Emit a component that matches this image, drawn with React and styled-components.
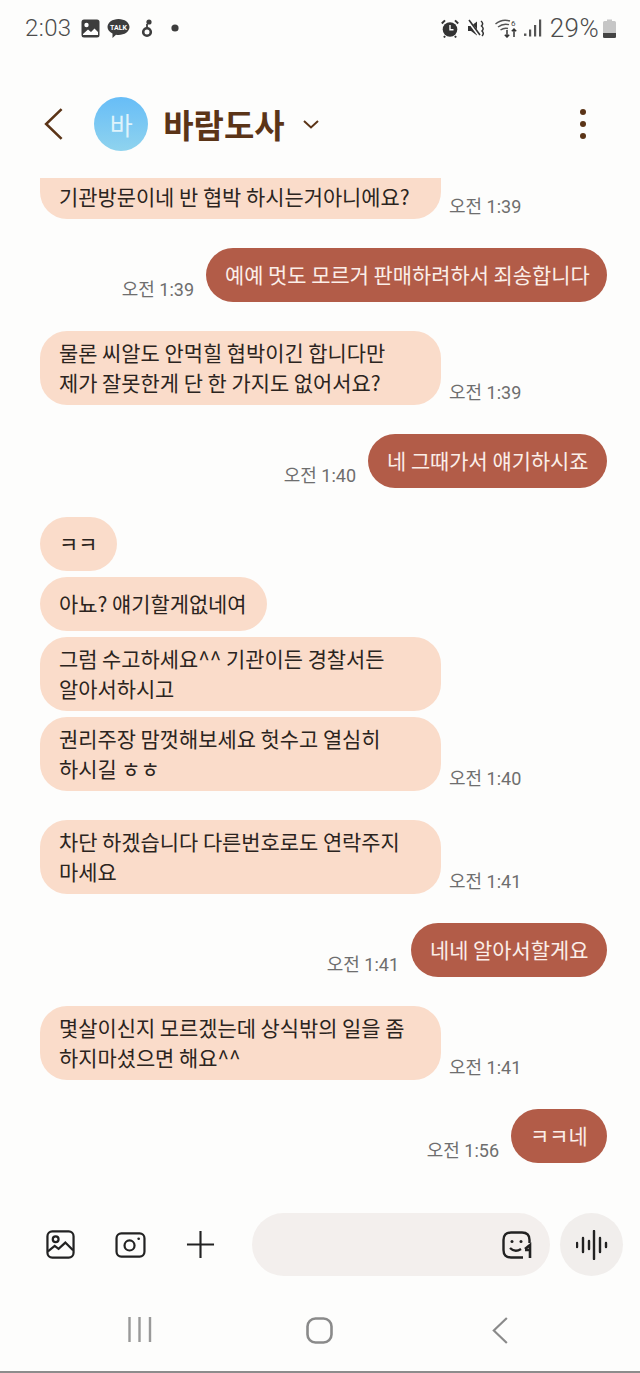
import React from "react";
import styled, { createGlobalStyle } from "styled-components";

const Global = createGlobalStyle`
  html, body { margin: 0; padding: 0; background: #fdfdfc; }
  * { box-sizing: border-box; }
`;
const FONT = `Roboto, "Noto Sans CJK KR", "Noto Sans", sans-serif`;
const KFONT = `"Noto Sans CJK KR", "Noto Sans", sans-serif`;

const Screen = styled.div`
  width: 640px; height: 1373px; display: flex; flex-direction: column;
  background: #fdfdfc; font-family: ${FONT}; overflow: hidden;
`;
const StatusBar = styled.div`
  height: 56px; flex: none; display: flex; align-items: center; justify-content: space-between;
  padding: 0 24px 0 25px; color: #4c4c4c;
`;
const StatusGroup = styled.div`display: flex; align-items: center;`;
const StatusText = styled.span`
  font-size: ${p => p.$size || 24}px; font-weight: 300; letter-spacing: 0.4px; line-height: 1;
  margin-left: ${p => p.$ml || 0}px;
`;
const Icon = styled.svg`flex: none; display: block; margin-left: ${p => p.$ml || 0}px; margin-right: ${p => p.$mr || 0}px;`;

const Header = styled.header`
  height: 122px; flex: none; display: flex; align-items: center; padding: 14px 44px 0 44px; color: #5b3417;
`;
const Avatar = styled.div`
  width: 54px; height: 54px; border-radius: 50%; margin-left: 31px; flex: none;
  background: linear-gradient(180deg, #67bdf7 0%, #8fd3ee 100%);
  display: flex; align-items: center; justify-content: center;
  color: #dff3fb; font-size: 25px; font-weight: 400; font-family: ${KFONT};
`;
const Name = styled.h1`
  margin: 0 0 0 15px; font-size: 33px; line-height: 1; font-weight: 700; color: #5b3417; font-family: ${KFONT};
`;
const Spacer = styled.div`flex: 1;`;

const List = styled.main`
  flex: none; height: 985px; overflow: hidden; display: flex; flex-direction: column; justify-content: flex-end;
`;
const Row = styled.div`
  flex: none; display: flex; align-items: flex-end; padding: 0 33px 0 40px;
  justify-content: ${p => (p.$sent ? "flex-end" : "flex-start")};
  margin-top: ${p => (p.$tight ? 6 : 29)}px;
`;
const Bubble = styled.div`
  flex: none; width: ${p => p.$w}px; min-height: 54px; padding: 6px 10px 8px 19px;
  border-radius: 27px; font-size: 20.9px; line-height: 30px; font-family: ${KFONT};
  display: flex; flex-direction: column; justify-content: center; white-space: nowrap;
  background: ${p => (p.$sent ? "#b25c48" : "#fadcca")};
  color: ${p => (p.$sent ? "#fbeee8" : "#2b2420")};
`;
const Time = styled.span`
  flex: none; font-size: 18px; line-height: 24px; color: #6e6e6e; white-space: nowrap;
  margin: ${p => (p.$sent ? "0 12px 0 0" : "0 0 0 8px")};
`;
const Composer = styled.div`
  height: 63px; margin-top: 50px; flex: none; display: flex; align-items: center; padding: 0 17px 0 46px; color: #222;
`;
const Tools = styled.div`display: flex; align-items: center; gap: 40px; width: 206px; flex: none;`;
const Input = styled.div`
  width: 298px; height: 63px; border-radius: 32px; background: #f3efed; flex: none;
  display: flex; align-items: center; justify-content: flex-end; padding-right: 18px;
`;
const Voice = styled.div`
  width: 63px; height: 63px; border-radius: 50%; background: #f1eeec; margin-left: 10px; flex: none;
  display: flex; align-items: center; justify-content: center;
`;
const Nav = styled.nav`
  flex: 1; display: flex; align-items: flex-start; padding: 41px 0 0 128px;
  border-bottom: 2px solid #8c8c8c;
`;

const Back = ({ size = 32, color = "#5b3417", w = 2.4, ml = 0 }) => (
  <Icon $ml={ml} width={size * 0.6} height={size} viewBox="0 0 18 30" fill="none" stroke={color} strokeWidth={w}>
    <path d="M16.5 1 L2 15 L16.5 29" />
  </Icon>
);

const messages = [
  { lines: ["\u00a0", "기관방문이네 반 협박 하시는거아니에요?"], w: 401, time: "오전 1:39" },
  { sent: true, lines: ["예예 멋도 모르거 판매하려하서 죄송합니다"], w: 401, time: "오전 1:39" },
  { lines: ["물론 씨알도 안먹힐 협박이긴 합니다만", "제가 잘못한게 단 한 가지도 없어서요?"], w: 401, time: "오전 1:39" },
  { sent: true, lines: ["네 그때가서 얘기하시죠"], w: 239, time: "오전 1:40" },
  { lines: ["ㅋㅋ"], w: 77 },
  { tight: true, lines: ["아뇨? 얘기할게없네여"], w: 227 },
  { tight: true, lines: ["그럼 수고하세요^^ 기관이든 경찰서든", "알아서하시고"], w: 401 },
  { tight: true, lines: ["권리주장 맘껏해보세요 헛수고 열심히", "하시길 ㅎㅎ"], w: 401, time: "오전 1:40" },
  { lines: ["차단 하겠습니다 다른번호로도 연락주지", "마세요"], w: 401, time: "오전 1:41" },
  { sent: true, lines: ["네네 알아서할게요"], w: 196, time: "오전 1:41" },
  { lines: ["몇살이신지 모르겠는데 상식밖의 일을 좀", "하지마셨으면 해요^^"], w: 401, time: "오전 1:41" },
  { sent: true, lines: ["ㅋㅋ네"], w: 96, time: "오전 1:56" },
];

export default function App() {
  return (
    <Screen>
      <Global />
      <StatusBar>
        <StatusGroup>
          <StatusText>2:03</StatusText>
          <Icon $ml={9} width="19" height="19" viewBox="0 0 19 19">
            <rect x="0.5" y="0.5" width="18" height="18" rx="2.5" fill="#3d3d3d" />
            <circle cx="5.5" cy="6" r="2.2" fill="#fff" />
            <path d="M2 15 L7 10.5 L10 13 L13.5 9.5 L17 13 V16 H2 Z" fill="#fff" />
          </Icon>
          <Icon $ml={7} width="23" height="21" viewBox="0 0 23 21">
            <path d="M11.5 1 C17.6 1 22.5 4.6 22.5 9 C22.5 13.4 17.6 17 11.5 17 C10.6 17 9.8 16.9 9 16.8 L5.5 20 V15.6 C2.5 14.2 0.5 11.8 0.5 9 C0.5 4.6 5.4 1 11.5 1 Z" fill="#3d3d3d" />
            <text x="11.5" y="11.6" textAnchor="middle" fontSize="7" fontWeight="700" fill="#fff" fontFamily="Roboto, sans-serif">TALK</text>
          </Icon>
          <Icon $ml={11} width="12" height="20" viewBox="0 0 12 20">
            <circle cx="6" cy="14" r="3.8" fill="none" stroke="#3d3d3d" strokeWidth="2.6" />
            <path d="M6 10 V6" fill="none" stroke="#3d3d3d" strokeWidth="1.8" />
            <circle cx="8" cy="4" r="2.6" fill="#3d3d3d" />
          </Icon>
          <Icon $ml={18} width="8" height="8" viewBox="0 0 8 8">
            <circle cx="4" cy="4" r="3.6" fill="#3d3d3d" />
          </Icon>
        </StatusGroup>
        <StatusGroup>
          <Icon width="18" height="19" viewBox="0 0 18 19">
            <circle cx="9" cy="10.5" r="7.3" fill="#333" />
            <path d="M9 6 V10.8 H12.5" fill="none" stroke="#fff" strokeWidth="1.4" />
            <path d="M0.8 4.5 L4 1.4 M17.2 4.5 L14 1.4 M4 17 L3 18.5 M14 17 L15 18.5" stroke="#333" strokeWidth="2" />
          </Icon>
          <Icon $ml={8} width="19" height="19" viewBox="0 0 19 19">
            <path d="M1 7 H4 L10 2.5 V16.5 L4 12 H1 Z" fill="#333" />
            <path d="M1 1 L12 16" stroke="#fff" strokeWidth="3" />
            <path d="M2 1 L13 16" stroke="#333" strokeWidth="1.6" />
            <path d="M14 2 Q17 4.5 14.5 7 Q17.5 9.5 15 12 Q17.5 14.5 15 17" fill="none" stroke="#333" strokeWidth="1.5" />
          </Icon>
          <Icon $ml={9} width="24" height="20" viewBox="0 0 24 20" fill="none" stroke="#555">
            <path d="M0.5 6 Q7 0.5 15 3" strokeWidth="1.5" />
            <path d="M3 9 Q8 5 14 6.6" strokeWidth="1.5" />
            <path d="M5.5 12 Q9 9.5 13 10.5" strokeWidth="1.5" />
            <text x="16" y="8" fontSize="8" fill="#444" stroke="none" fontFamily="Roboto, sans-serif">6</text>
            <path d="M12 12 V19 M9.8 16.8 L12 19 L14.2 16.8 M19 19 V11 M16.8 13.2 L19 11 L21.2 13.2" stroke="#333" strokeWidth="1.5" />
          </Icon>
          <Icon $ml={5} width="18" height="20" viewBox="0 0 18 20">
            <rect x="0" y="15.5" width="2.4" height="2.4" fill="#555" />
            <rect x="5" y="11.5" width="2.2" height="7" fill="#555" />
            <rect x="10" y="7" width="2.2" height="11.5" fill="#555" />
            <rect x="15" y="1.5" width="2.2" height="17" fill="#555" />
          </Icon>
          <StatusText $ml={8} $size={26}>29%</StatusText>
          <Icon $ml={4} width="13" height="19" viewBox="0 0 13 19">
            <path d="M4 0.5 H9 V2 H11.5 Q13 2 13 3.5 V17.5 Q13 19 11.5 19 H1.5 Q0 19 0 17.5 V3.5 Q0 2 1.5 2 H4 Z" fill="#c6c6c6" />
            <path d="M0 14 H13 V17.5 Q13 19 11.5 19 H1.5 Q0 19 0 17.5 Z" fill="#444" />
          </Icon>
        </StatusGroup>
      </StatusBar>

      <Header>
        <Back />
        <Avatar>바</Avatar>
        <Name>바람도사</Name>
        <Icon $ml={18} width="16" height="9" viewBox="0 0 16 9" fill="none" stroke="#5b3417" strokeWidth="2">
          <path d="M1 1 L8 7.5 L15 1" />
        </Icon>
        <Spacer />
        <Icon $mr={9} width="8" height="30" viewBox="0 0 8 30" fill="#5b3417">
          <circle cx="4" cy="3" r="3" />
          <circle cx="4" cy="15" r="3" />
          <circle cx="4" cy="27" r="3" />
        </Icon>
      </Header>

      <List>
        {messages.map((m, i) => (
          <Row key={i} $sent={m.sent} $tight={m.tight}>
            {m.sent && m.time && <Time $sent>{m.time}</Time>}
            <Bubble $sent={m.sent} $w={m.w}>
              {m.lines.map((l, j) => <div key={j}>{l}</div>)}
            </Bubble>
            {!m.sent && m.time && <Time>{m.time}</Time>}
          </Row>
        ))}
      </List>

      <Composer>
        <Tools>
          <Icon width="29" height="29" viewBox="0 0 30 30" fill="none" stroke="#222" strokeWidth="2.3">
            <rect x="1.5" y="1.5" width="27" height="27" rx="5" />
            <circle cx="10" cy="9.5" r="3" />
            <path d="M2 22 L9 16.5 L13 19.5 L20 13 L28 21" />
          </Icon>
          <Icon width="31" height="26" viewBox="0 0 32 27" fill="none" stroke="#222" strokeWidth="2.3">
            <rect x="1.5" y="1.5" width="29" height="24" rx="5" />
            <circle cx="15" cy="14" r="5.2" />
            <circle cx="24.5" cy="7" r="1.4" fill="#222" stroke="none" />
          </Icon>
          <Icon width="29" height="29" viewBox="0 0 30 30" stroke="#222" strokeWidth="2.2">
            <path d="M1 15 H29 M15 1 V29" />
          </Icon>
        </Tools>
        <Input>
          <Icon width="30" height="28" viewBox="0 0 30 28" fill="none" stroke="#222" strokeWidth="2.4">
            <path d="M21 26.5 H9 Q1.5 26.5 1.5 19 V9 Q1.5 1.5 9 1.5 H20 Q27.5 1.5 27.5 9 V12" />
            <circle cx="10" cy="10.5" r="1.5" fill="#222" stroke="none" />
            <circle cx="19" cy="10.5" r="1.5" fill="#222" stroke="none" />
            <path d="M8 17 Q13 22 19 18" />
            <path d="M23 18 L28 14 V27 M23 19 L27 19" strokeWidth="2.6" />
          </Icon>
        </Input>
        <Voice>
          <Icon width="32" height="30" viewBox="0 0 32 30" stroke="#222" strokeWidth="2.4" strokeLinecap="round">
            <path d="M1 13 V17 M7 8 V22 M13 11 V19 M18 1 V29 M24 8 V22 M30 13 V17" />
          </Icon>
        </Voice>
      </Composer>

      <Nav>
        <Icon width="24" height="25" viewBox="0 0 24 25" stroke="#999" strokeWidth="2.4">
          <path d="M1.5 0 V25 M11.5 0 V25 M22 0 V25" />
        </Icon>
        <Icon $ml={154} width="27" height="27" viewBox="0 0 27 27" fill="none" stroke="#8a8a8a" strokeWidth="2.6">
          <rect x="1.5" y="1.5" width="24" height="24" rx="8" />
        </Icon>
        <Back ml={159} size={27} color="#8a8a8a" w={2.4} />
      </Nav>
    </Screen>
  );
}
